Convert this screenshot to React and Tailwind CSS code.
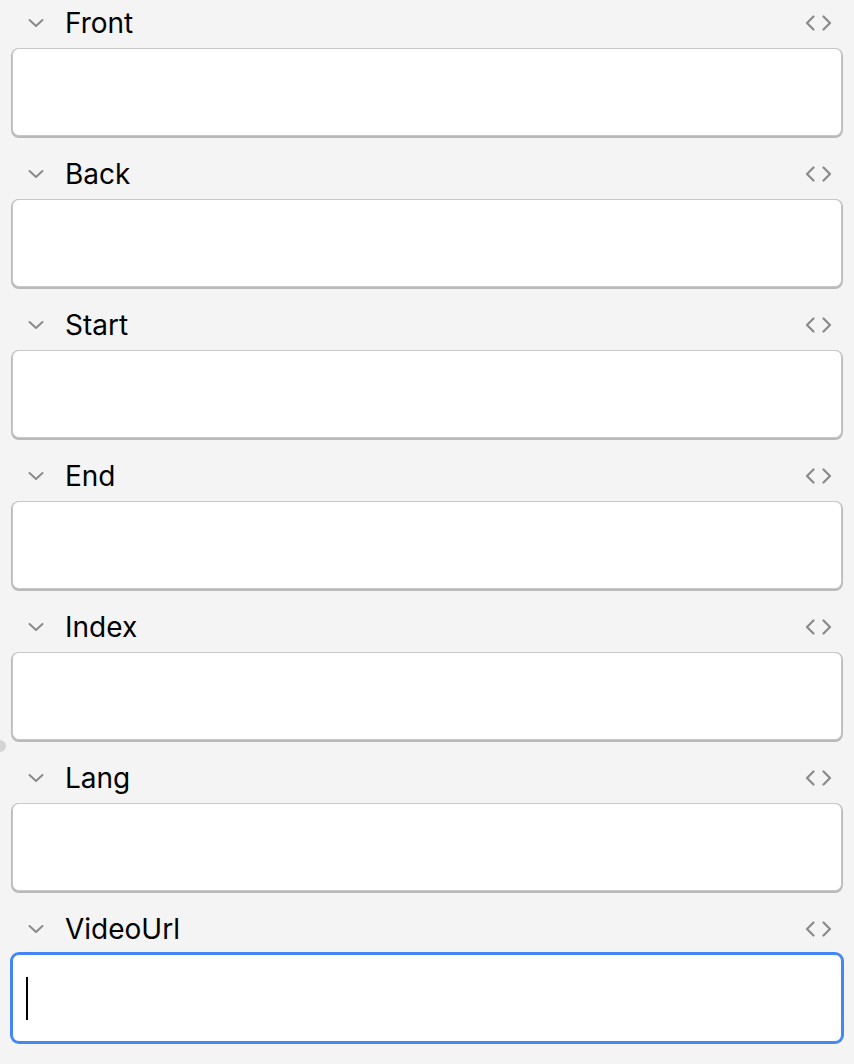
import React from "react";

const fields = ["Front", "Back", "Start", "End", "Index", "Lang", "VideoUrl"];

// small collapse chevron left of the field name
function Chevron() {
  return (
    <svg width="16" height="10" viewBox="0 0 16 10" fill="none">
      <path d="M1.5 2 L8 8 L14.5 2" stroke="#8a8a8a" strokeWidth="2" strokeLinecap="round" strokeLinejoin="round" />
    </svg>
  );
}

// "<>" html editor toggle
function CodeIcon() {
  return (
    <svg width="27" height="16" viewBox="0 0 27 16" fill="none">
      <path d="M8.5 1.5 L2 8 L8.5 14.5" stroke="#8a8a8a" strokeWidth="2.2" strokeLinecap="round" strokeLinejoin="round" />
      <path d="M18.5 1.5 L25 8 L18.5 14.5" stroke="#8a8a8a" strokeWidth="2.2" strokeLinecap="round" strokeLinejoin="round" />
    </svg>
  );
}

function Field({ name, focused }) {
  return (
    <div className="flex flex-col">
      <div className="flex items-center h-[45px] pl-[16px] pr-[10px]">
        <Chevron />
        <span className="ml-[21px] text-[28px] leading-[34px] text-black" style={{ fontFamily: "Inter, 'Liberation Sans', sans-serif" }}>
          {name}
        </span>
        <div className="ml-auto flex items-center">
          <CodeIcon />
        </div>
      </div>
      <div
        className={
          focused
            ? "mt-[3px] h-[88px] bg-white rounded-[7px] border border-[#4387f6] ring-2 ring-[#4387f6] flex items-center pl-[13px]"
            : "mt-[3px] h-[88px] bg-white rounded-[7px] border border-[#c8c8c8] shadow-[0_1px_0_1px_#b9b9b9] flex items-center pl-[13px]"
        }
      >
        {focused && <div className="w-[2px] h-[43px] bg-black" />}
      </div>
    </div>
  );
}

export default function App() {
  return (
    <div className="relative min-h-screen bg-[#f4f4f4] px-[12px] overflow-hidden">
      <div className="flex flex-col gap-[15px]">
        {fields.map((f, i) => (
          <Field key={f} name={f} focused={i === fields.length - 1} />
        ))}
      </div>
      {/* resize handle peeking from the left edge */}
      <div className="absolute left-[-6px] top-[740px] w-[12px] h-[12px] rounded-full bg-[#d4d4d4]" />
    </div>
  );
}
